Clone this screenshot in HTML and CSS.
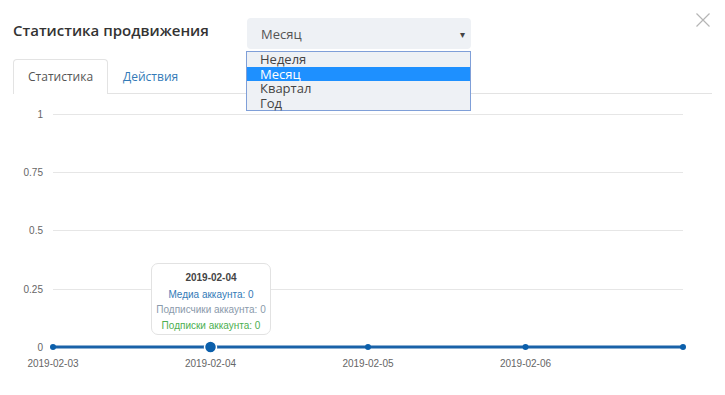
FILE: index.html
```html
<!DOCTYPE html>
<html lang="ru">
<head>
  <meta charset="UTF-8" />
  <title>Статистика продвижения</title>
  <link rel="stylesheet" href="styles.css">
</head>
<body>
  <div class="modal">
    <div class="header">
      <h2 class="title">Статистика продвижения</h2>
      <div class="select">
        <span>Месяц</span>
        <span class="arrow">&#9662;</span>
        <ul class="options">
          <li>Неделя</li>
          <li class="selected">Месяц</li>
          <li>Квартал</li>
          <li>Год</li>
        </ul>
      </div>
      <span class="close">
        <svg width="14" height="14" viewBox="0 0 14 14"><path d="M0.5 0.5 L13.5 13.5 M13.5 0.5 L0.5 13.5" stroke="#b5b5b5" stroke-width="1.2" fill="none"/></svg>
      </span>
    </div>

    <div class="tabs">
      <a class="tab active" href="#">Статистика</a>
      <a class="tab" href="#">Действия</a>
    </div>

    <div class="chart">
      <svg width="725" height="302" viewBox="0 0 725 302">
        <g stroke="#e6e6e6" stroke-width="1">
          <line x1="53" y1="20.5" x2="683" y2="20.5"/>
          <line x1="53" y1="78.5" x2="683" y2="78.5"/>
          <line x1="53" y1="136.5" x2="683" y2="136.5"/>
          <line x1="53" y1="195.5" x2="683" y2="195.5"/>
        </g>
        <g class="axis" text-anchor="end">
          <text x="43" y="24">1</text>
          <text x="43" y="82">0.75</text>
          <text x="43" y="140">0.5</text>
          <text x="43" y="199">0.25</text>
          <text x="43" y="257">0</text>
        </g>
        <line x1="53" y1="253" x2="683" y2="253" stroke="#1a62a8" stroke-width="3"/>
        <g fill="#0b5fab">
          <circle cx="53" cy="253" r="3"/>
          <circle cx="368" cy="253" r="3"/>
          <circle cx="525.5" cy="253" r="3"/>
          <circle cx="683" cy="253" r="3"/>
          <circle cx="210.5" cy="253" r="6" stroke="#fff" stroke-width="1.5"/>
        </g>
        <g class="axis" text-anchor="middle">
          <text x="53" y="273">2019-02-03</text>
          <text x="210.5" y="273">2019-02-04</text>
          <text x="368" y="273">2019-02-05</text>
          <text x="525.5" y="273">2019-02-06</text>
        </g>
      </svg>
      <div class="tooltip">
        <div class="tip-date">2019-02-04</div>
        <div class="tip-media">Медиа аккаунта: 0</div>
        <div class="tip-followers">Подписчики аккаунта: 0</div>
        <div class="tip-subs">Подписки аккаунта: 0</div>
      </div>
    </div>
  </div>
</body>
</html>
```

FILE: styles.css
```css
body {
  margin: 0;
  background: #fff;
  font-family: "Open Sans", Arial, sans-serif;
  color: #333;
}
.modal {
  padding: 0 13px;
  width: 699px;
}
.header {
  display: flex;
  align-items: flex-start;
  padding-top: 18px;
  height: 31px;
}
.title {
  margin: 0;
  width: 234px;
  font-size: 15px;
  font-weight: 600;
  line-height: 22px;
  margin-top: 1px;
  color: #333;
}
.select {
  position: relative;
  box-sizing: border-box;
  width: 224px;
  height: 31px;
  padding: 0 6px 0 14px;
  background: #eef1f5;
  border-radius: 4px;
  display: flex;
  align-items: center;
  justify-content: space-between;
  font-size: 13px;
  color: #555;
}
.arrow {
  font-size: 10px;
  color: #444;
}
.options {
  position: absolute;
  top: 33px;
  left: -1px;
  width: 223px;
  margin: 0;
  padding: 0;
  list-style: none;
  background: #eef1f5;
  border: 1px solid #7f9fd8;
  font-size: 13px;
  line-height: 14.5px;
  color: #444;
  z-index: 2;
}
.options li {
  padding-left: 13px;
}
.options li.selected {
  background: #1e90ff;
  color: #fff;
}
.close {
  margin-left: auto;
  margin-top: -8px;
  margin-right: 2px;
}
.tabs {
  display: flex;
  margin-top: 10px;
  border-bottom: 1px solid #e3e3e3;
}
.tab {
  display: block;
  height: 33px;
  line-height: 33px;
  padding: 0 14px;
  font-size: 12px;
  text-decoration: none;
  color: #337ab7;
  border: 1px solid transparent;
  border-bottom: none;
  border-radius: 4px 4px 0 0;
  margin-bottom: -1px;
}
.tab.active {
  color: #555;
  background: #fff;
  border-color: #e3e3e3;
  height: 34px;
}
.chart {
  position: relative;
  margin: 0 -13px;
}
.chart svg {
  display: block;
}
.axis {
  font-family: "Liberation Sans", Arial, sans-serif;
  font-size: 10px;
  fill: #666;
}
.tooltip {
  position: absolute;
  left: 151px;
  top: 169px;
  box-sizing: border-box;
  width: 120px;
  height: 72px;
  padding-top: 6px;
  background: #fff;
  border: 1px solid #e2e2e2;
  border-radius: 7px;
  text-align: center;
  font-family: "Liberation Sans", Arial, sans-serif;
  font-size: 10px;
  line-height: 15.5px;
}
.tip-date {
  font-weight: bold;
  color: #444;
  margin-bottom: 1px;
}
.tip-media {
  color: #337ab7;
}
.tip-followers {
  color: #8b9aab;
}
.tip-subs {
  color: #4caf50;
}
```
